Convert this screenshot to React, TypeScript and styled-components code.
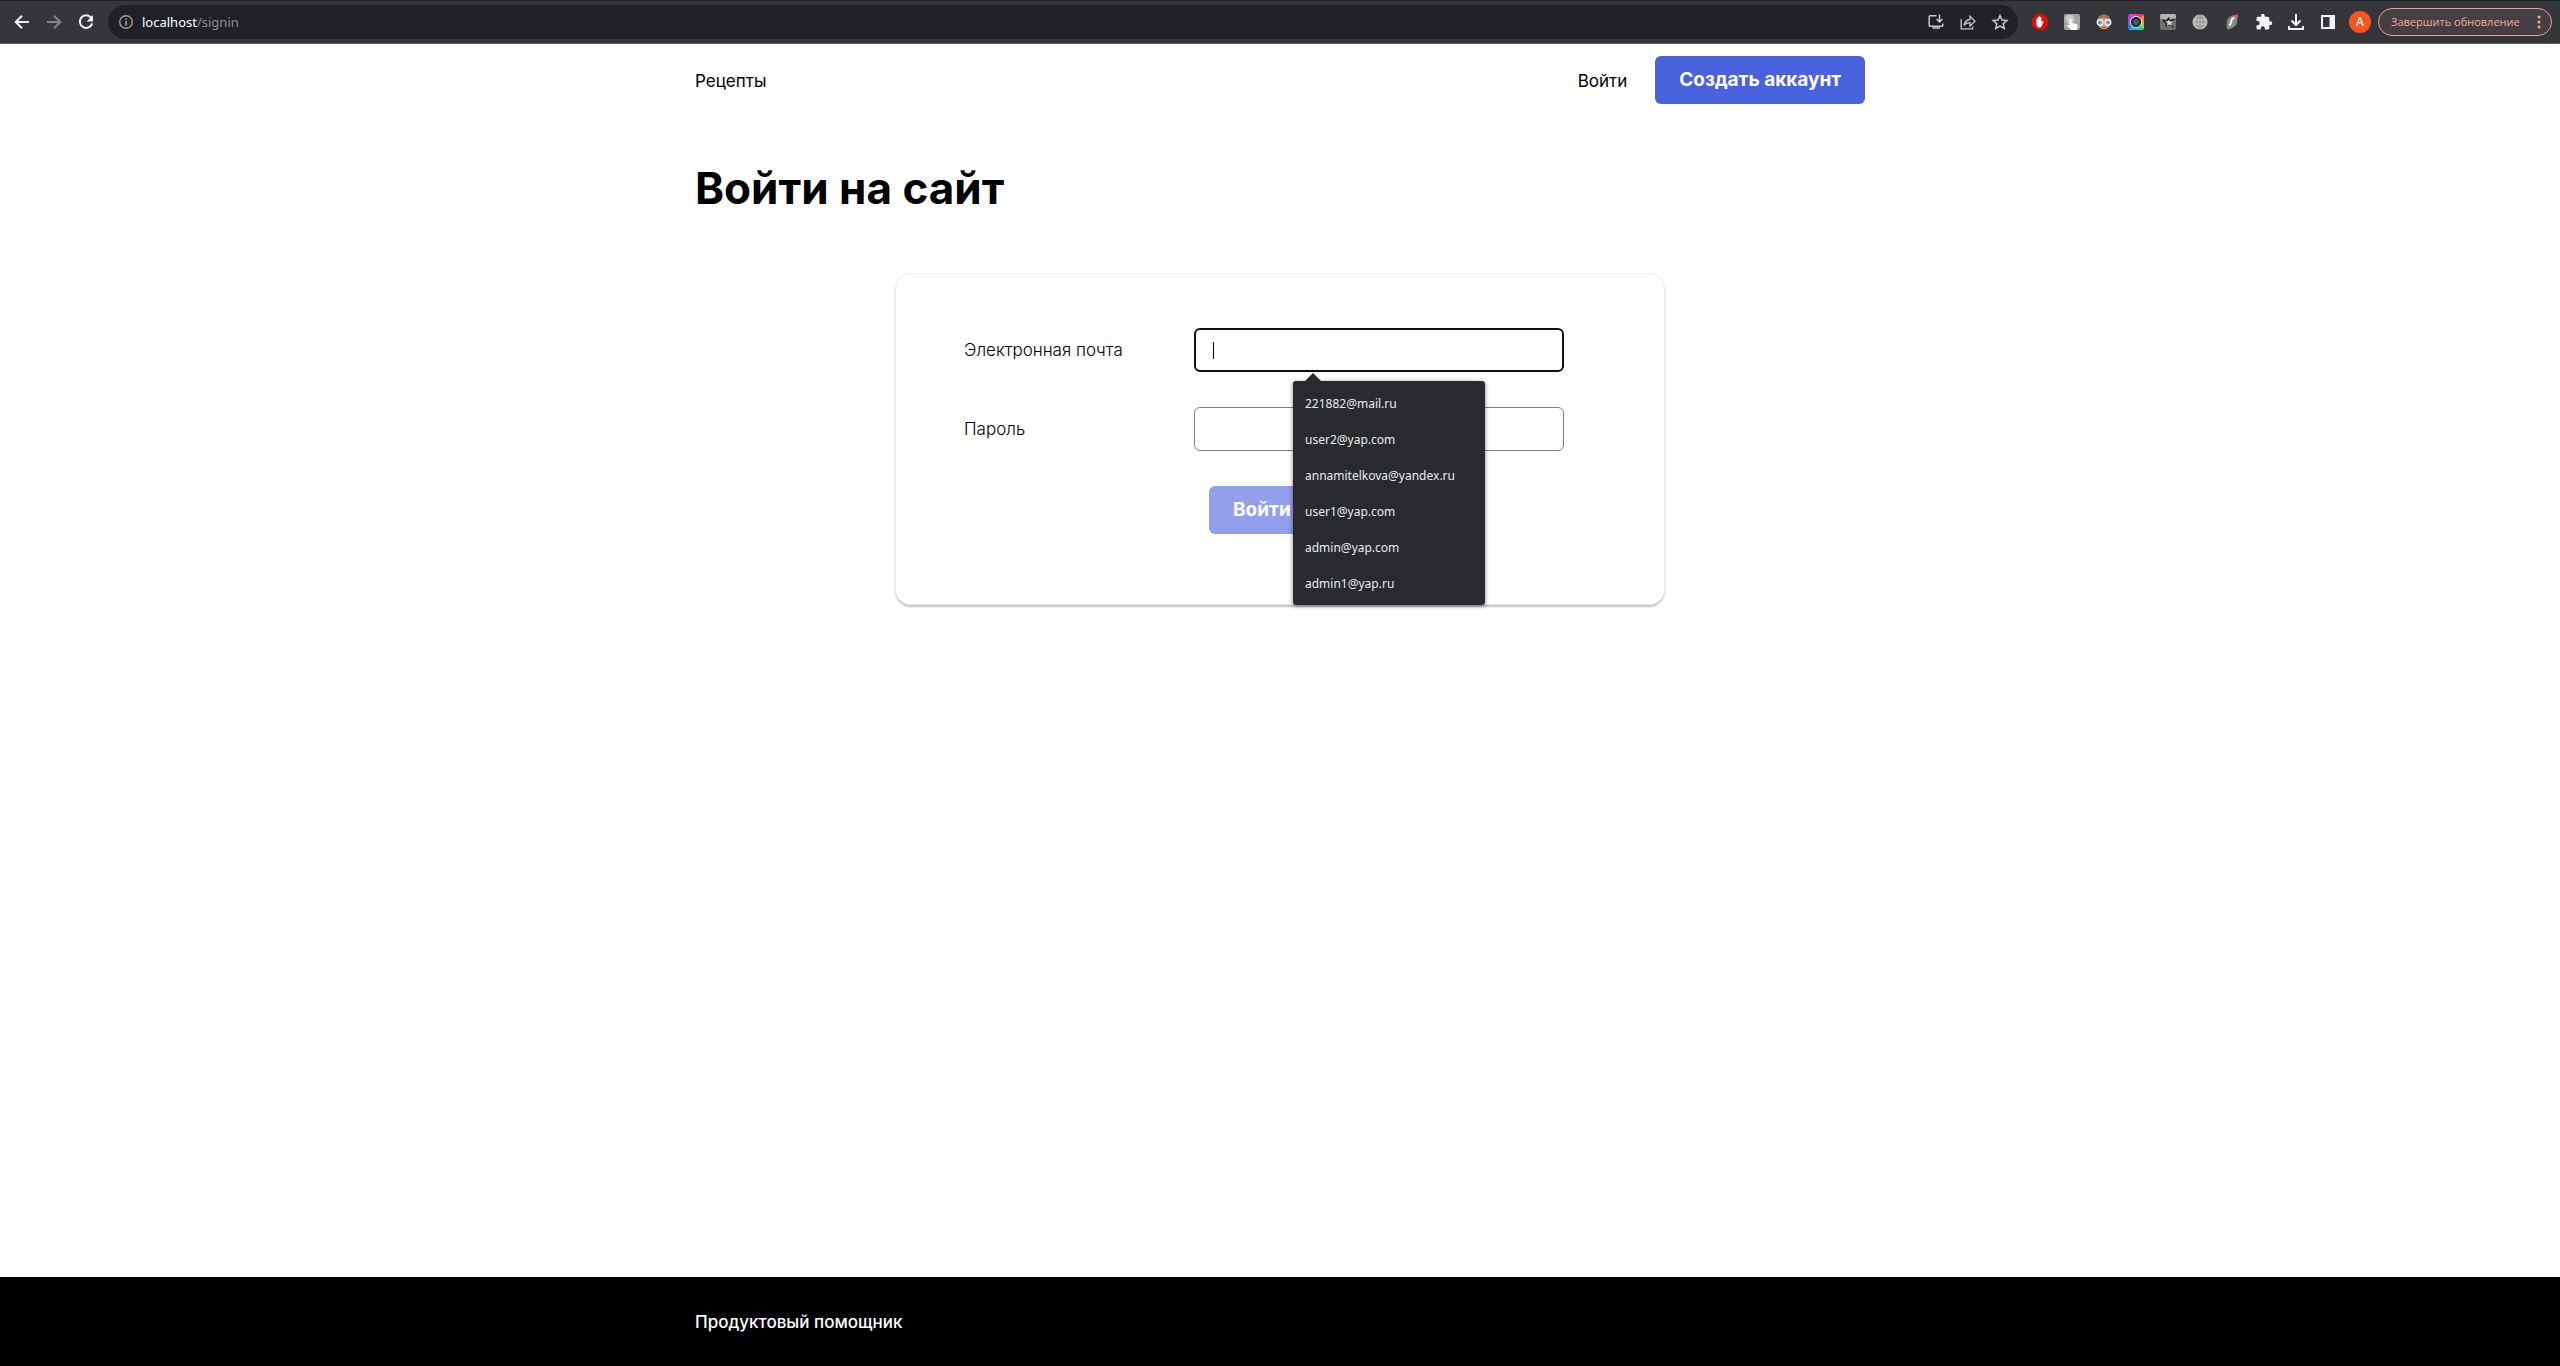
import React from "react";
import styled, { createGlobalStyle } from "styled-components";

const GlobalStyle = createGlobalStyle`
  *, *::before, *::after { box-sizing: border-box; }
  body {
    margin: 0;
    background: #fff;
    color: #000;
    font-family: Inter, "Liberation Sans", sans-serif;
    font-size: 17px;
  }
`;

const chromeFont = `"Noto Sans", "Open Sans", sans-serif`;

const Screen = styled.div`
  min-height: 100vh;
  display: flex;
  flex-direction: column;
`;

/* Browser toolbar */

const Toolbar = styled.div`
  display: flex;
  align-items: center;
  height: 44px;
  padding: 0 8px 0 6px;
  background: #35363a;
  border-top: 1px solid #202124;
  border-bottom: 1px solid #5b5a5e;
  font-family: ${chromeFont};
`;

const IconButton = styled.button`
  display: flex;
  align-items: center;
  justify-content: center;
  flex: none;
  width: 32px;
  height: 32px;
  padding: 0;
  border: 0;
  background: none;
  color: #f1f3f4;
  &:disabled { color: #85868a; }
  svg { display: block; }
`;

const AddressBar = styled.div`
  display: flex;
  align-items: center;
  flex: 1;
  height: 34px;
  margin: 0 6px;
  padding: 0 2px;
  border-radius: 17px;
  background: #202124;
  ${IconButton} { color: #c7c8ca; }
`;

const Address = styled.div`
  flex: 1;
  font-size: 13px;
  line-height: 18px;
  color: #8b8d91;
  b { font-weight: 400; color: #fff; }
`;

const Avatar = styled.button`
  width: 22px;
  height: 22px;
  margin: 0 5px;
  padding: 0;
  border: 0;
  border-radius: 50%;
  background: #f9531f;
  color: #fff;
  font: 500 12px/22px ${chromeFont};
`;

const UpdateButton = styled.button`
  display: flex;
  align-items: center;
  justify-content: space-between;
  width: 174px;
  height: 28px;
  margin-left: 2px;
  padding: 0 10px 0 12px;
  border: 1px solid #ee9f99;
  border-radius: 14px;
  background: #453e43;
  color: #f4aaa4;
  font: 400 11px/18px "Open Sans", sans-serif;
  white-space: nowrap;
`;

/* Site */

const Container = styled.div`
  width: 100%;
  max-width: 1170px;
  margin: 0 auto;
`;

const Header = styled(Container).attrs({ as: "header" })`
  display: flex;
  align-items: center;
  justify-content: space-between;
  padding: 12px 0;
`;

const Nav = styled.nav`
  display: flex;
  align-items: center;
  gap: 28px;
`;

const NavLink = styled.a`
  padding-top: 2px;
  color: #000;
  font-size: 17px;
  line-height: 20px;
  text-decoration: none;
`;

const Button = styled.button`
  height: 48px;
  padding: 0 24px;
  border: 0;
  border-radius: 6px;
  background: #4a61dd;
  color: #fff;
  font: 700 19px/22px Inter, sans-serif;
  white-space: nowrap;
  &:disabled { opacity: 0.6; }
`;

const Main = styled(Container).attrs({ as: "main" })`
  flex: 1;
`;

const Title = styled.h1`
  margin: 48px 0 60px;
  font-size: 44px;
  line-height: 49px;
  font-weight: 700;
`;

const Card = styled.form`
  display: flex;
  flex-direction: column;
  gap: 35px;
  max-width: 770px;
  margin: 0 auto;
  padding: 54px 100px 70px 68px;
  border: 1px solid #ececec;
  border-radius: 16px;
  box-shadow: 0 2px 2px rgba(0, 0, 0, 0.25);
`;

const Field = styled.div`
  display: grid;
  grid-template-columns: 230px 1fr;
  align-items: center;
`;

const Label = styled.label`
  font-size: 17px;
  line-height: 20px;
  font-weight: 300;
`;

const InputWrap = styled.div`
  position: relative;
`;

const Input = styled.input`
  display: block;
  width: 100%;
  height: 44px;
  padding: 0 18px;
  border: 1px solid #808080;
  border-radius: 6px;
  outline: 0;
  background: #fff;
  caret-color: transparent;
  font: 400 14px/18px Inter, sans-serif;
  &:focus { border: 2px solid #101010; }
`;

const Caret = styled.span`
  position: absolute;
  left: 19px;
  top: 14px;
  width: 1px;
  height: 17px;
  background: #000;
`;

const Suggestions = styled.ul`
  position: absolute;
  z-index: 1;
  left: 99px;
  top: 53px;
  width: 192px;
  margin: 0;
  padding: 5px 0 3px;
  border-radius: 3px;
  background: #292a2d;
  box-shadow: 0 1px 4px rgba(0, 0, 0, 0.5);
  list-style: none;
  &::before {
    content: "";
    position: absolute;
    left: 12px;
    top: -8px;
    border: 8px solid transparent;
    border-top: 0;
    border-bottom-color: #292a2d;
  }
`;

const Suggestion = styled.li`
  padding: 0 12px;
  color: #e8eaed;
  font: 400 12px/36px ${chromeFont};
`;

const Submit = styled.div`
  padding-left: 245px;
`;

const Footer = styled.footer`
  padding: 33px 0 34px;
  background: #000;
`;

const FooterLink = styled(NavLink)`
  display: block;
  color: #fff;
  font-weight: 500;
`;

/* Icons */

const Line = ({ d, size = 20, width = 2 }: { d: string; size?: number; width?: number }) => (
  <svg width={size} height={size} viewBox="0 0 20 20" fill="none" stroke="currentColor" strokeWidth={width} aria-hidden="true">
    <path d={d} />
  </svg>
);

const Reload = () => (
  <svg width="20" height="20" viewBox="0 0 20 20" aria-hidden="true">
    <path d="M15 5.6A6.3 6.3 0 1 0 16.2 11.4" fill="none" stroke="currentColor" strokeWidth="2" />
    <path d="M17 3v6.4h-6.4z" fill="currentColor" />
  </svg>
);

const Info = () => (
  <svg width="16" height="16" viewBox="0 0 16 16" aria-hidden="true">
    <circle cx="8" cy="8" r="6.3" fill="none" stroke="#9a9b9e" strokeWidth="1.4" />
    <path d="M8 7v4.4M8 4.4v1.5" stroke="#b0b1b4" strokeWidth="1.5" />
  </svg>
);

const AdBlock = () => (
  <svg width="16" height="16" viewBox="0 0 16 16" aria-hidden="true">
    <path d="M4.7 0h6.6L16 4.7v6.6L11.3 16H4.7L0 11.3V4.7z" fill="#e40d0d" />
    <path d="M4.3 8.3V5.2q.7-.8 1.2 0V3.3q.6-.8 1.3 0v-.7q.7-.8 1.4 0v.8q.8-.7 1.3.1v5l1.2-1.3q1-.3 1 .5l-2 4.2q-.8 1.6-2.4 1.6-3 0-3-5.2z" fill="#fff" />
  </svg>
);

const Clicker = () => (
  <svg width="16" height="16" viewBox="0 0 16 16" aria-hidden="true">
    <rect width="16" height="16" rx="2" fill="#a5a5a5" />
    <circle cx="6" cy="5.5" r="4.5" fill="#c9c9c9" />
    <path d="M5.500 5q1-1 2 0v4l5 1q1.200.5 1 2l-.6 4H7.500L3 11.500q.6-1.300 2.500 0z" fill="#fff" />
  </svg>
);

const Face = () => (
  <svg width="16" height="16" viewBox="0 0 16 16" aria-hidden="true">
    <path d="M1.5 7Q2 1 8 .5 14 1 14.5 7L13 13q-5 4.5-10 0z" fill="#dc9c72" />
    <path d="M1.5 6Q2 .8 8 .5q6 .3 6.5 5.5-3-2-6.5-2T1.5 6z" fill="#9a7350" />
    <circle cx="4" cy="8.5" r="2.7" fill="#5b9db0" stroke="#f1f5f5" strokeWidth="1.4" />
    <circle cx="12" cy="8.5" r="2.7" fill="#5b9db0" stroke="#f1f5f5" strokeWidth="1.4" />
    <path d="M6 13.5h4" stroke="#8c4b3c" />
  </svg>
);

const ColorLens = () => (
  <svg width="16" height="16" viewBox="0 0 16 16" aria-hidden="true">
    <defs>
      <clipPath id="lens"><rect width="16" height="16" rx="2.5" /></clipPath>
    </defs>
    <g clipPath="url(#lens)">
      <path d="M8 8L0 0h8z" fill="#e23bd0" />
      <path d="M8 8V0h8z" fill="#ff2d78" />
      <path d="M8 8l8-8v8z" fill="#ff8a1f" />
      <path d="M8 8h8v8z" fill="#8ed832" />
      <path d="M8 8l8 8H8z" fill="#22d0a0" />
      <path d="M8 8v8H0z" fill="#1cb8f2" />
      <path d="M8 8l-8 8V8z" fill="#5468f5" />
      <path d="M8 8H0V0z" fill="#a843ee" />
    </g>
    <circle cx="8" cy="8" r="6" fill="#fff" />
    <circle cx="8" cy="8" r="5.2" fill="#1d2a3a" />
    <circle cx="8" cy="8" r="3" fill="#46596d" />
  </svg>
);

const Spider = () => (
  <svg width="16" height="16" viewBox="0 0 16 16" aria-hidden="true">
    <rect width="16" height="16" rx="2" fill="#707070" />
    <path d="M0 2q0-2 2-2h12q2 0 2 2v2L1 7z" fill="#b5b5b5" />
    <path d="M1 5l5 1 3-3 1 3 5-1-4 4 3 5-5-3-4 2 1-3z" fill="#191919" />
    <path d="M5 7l3 .5 1-2 1 2 3-.5-2 2.500 1.500 2.500L9 10.500 6.500 12 7.500 9.500z" fill="#d8d8d8" />
  </svg>
);

const Globe = () => (
  <svg width="16" height="16" viewBox="0 0 16 16" aria-hidden="true">
    <circle cx="8" cy="8" r="7.5" fill="#c4c4c4" />
    <path d="M8 .5v15M.5 8h15M2 4h12M2 12h12M8 .5q-7 7.5 0 15M8 .5q7 7.5 0 15" fill="none" stroke="#808184" strokeWidth=".7" />
  </svg>
);

const Leaf = () => (
  <svg width="16" height="16" viewBox="0 0 16 16" aria-hidden="true">
    <path d="M3 15.5Q1.500 5 6 2.500 9 .5 13 1q1.500 9-3 12-3 2-7 2.500z" fill="#89898c" />
    <path d="M10.500 4.500Q8 3.500 7.500 6.500T5.500 11.500" fill="none" stroke="#fff" strokeWidth="1.8" />
    <circle cx="12.5" cy="2" r="1.8" fill="#ff4a65" />
  </svg>
);

const Puzzle = () => (
  <svg width="18" height="18" viewBox="0 0 24 24" aria-hidden="true">
    <path fill="currentColor" d="M20.5 11H19V7a2 2 0 0 0-2-2h-4V3.500a2.500 2.500 0 0 0-5 0V5H4a2 2 0 0 0-2 2v3.800h1.500a2.700 2.700 0 0 1 0 5.400H2V20a2 2 0 0 0 2 2h3.800v-1.500a2.700 2.700 0 0 1 5.400 0V22H17a2 2 0 0 0 2-2v-4h1.500a2.500 2.500 0 0 0 0-5z" />
  </svg>
);

const SidePanel = () => (
  <svg width="16" height="16" viewBox="0 0 16 16" aria-hidden="true">
    <path fill="currentColor" fillRule="evenodd" d="M1 1h14v14H1zM3 3v10h6.500V3z" />
  </svg>
);

const Dots = () => (
  <svg width="4" height="14" viewBox="0 0 4 14" fill="currentColor" aria-hidden="true">
    <circle cx="2" cy="2" r="1.5" /><circle cx="2" cy="7" r="1.5" /><circle cx="2" cy="12" r="1.5" />
  </svg>
);

const extensions = [
  { name: "AdBlock", icon: <AdBlock /> },
  { name: "Clicker", icon: <Clicker /> },
  { name: "Face", icon: <Face /> },
  { name: "Color picker", icon: <ColorLens /> },
  { name: "Spider", icon: <Spider /> },
  { name: "Globe", icon: <Globe /> },
  { name: "Leaf", icon: <Leaf /> },
  { name: "Extensions", icon: <Puzzle /> },
  { name: "Downloads", icon: <Line d="M10 2v10.500M5.500 8.500l4.500 4.500 4.500-4.500M3 14v3h14v-3" /> },
  { name: "Side panel", icon: <SidePanel /> },
];

const emails = [
  "221882@mail.ru",
  "user2@yap.com",
  "annamitelkova@yandex.ru",
  "user1@yap.com",
  "admin@yap.com",
  "admin1@yap.ru",
];

export default function App() {
  return (
    <Screen>
      <GlobalStyle />
      <Toolbar>
        <IconButton aria-label="Back"><Line d="M17 10H4.500M10 3.700L3.700 10l6.300 6.300" /></IconButton>
        <IconButton aria-label="Forward" disabled><Line d="M3 10h12.500M10 3.700l6.300 6.300-6.300 6.300" /></IconButton>
        <IconButton aria-label="Reload"><Reload /></IconButton>
        <AddressBar>
          <IconButton aria-label="Site information"><Info /></IconButton>
          <Address><b>localhost</b>/signin</Address>
          <IconButton aria-label="Install">
            <Line width={1.5} d="M10.500 3.700H4q-.8 0-.8.800v9q0 .8.800.800h12q.8 0 .8-.8V11.500M6.500 16h7.500M13.500 2.500v7M10.500 7l3 3 3-3" />
          </IconButton>
          <IconButton aria-label="Share">
            <Line width={1.3} d="M3.200 7v9.800h11.500V14.500M6 13.500q.8-5.500 6-6V4.200l5 5-5 4.800v-3.300q-4-.2-6 2.800z" />
          </IconButton>
          <IconButton aria-label="Bookmark">
            <Line width={1.5} d="M10 3.500l2 4.500 4.900.5-3.700 3.200 1.100 4.800L10 14l-4.300 2.500 1.100-4.800L3.100 8.500 8 8z" />
          </IconButton>
        </AddressBar>
        {extensions.map((e) => (
          <IconButton key={e.name} aria-label={e.name}>{e.icon}</IconButton>
        ))}
        <Avatar>A</Avatar>
        <UpdateButton>Завершить обновление<Dots /></UpdateButton>
      </Toolbar>

      <Header>
        <Nav><NavLink href="#recipes">Рецепты</NavLink></Nav>
        <Nav>
          <NavLink href="#signin">Войти</NavLink>
          <Button type="button">Создать аккаунт</Button>
        </Nav>
      </Header>

      <Main>
        <Title>Войти на сайт</Title>
        <Card>
          <Field>
            <Label htmlFor="email">Электронная почта</Label>
            <InputWrap>
              <Input id="email" type="email" autoComplete="off" autoFocus />
              <Caret />
              <Suggestions>
                {emails.map((email) => <Suggestion key={email}>{email}</Suggestion>)}
              </Suggestions>
            </InputWrap>
          </Field>
          <Field>
            <Label htmlFor="password">Пароль</Label>
            <InputWrap><Input id="password" type="password" /></InputWrap>
          </Field>
          <Submit><Button type="submit" disabled>Войти</Button></Submit>
        </Card>
      </Main>

      <Footer>
        <Container><FooterLink href="#home">Продуктовый помощник</FooterLink></Container>
      </Footer>
    </Screen>
  );
}
